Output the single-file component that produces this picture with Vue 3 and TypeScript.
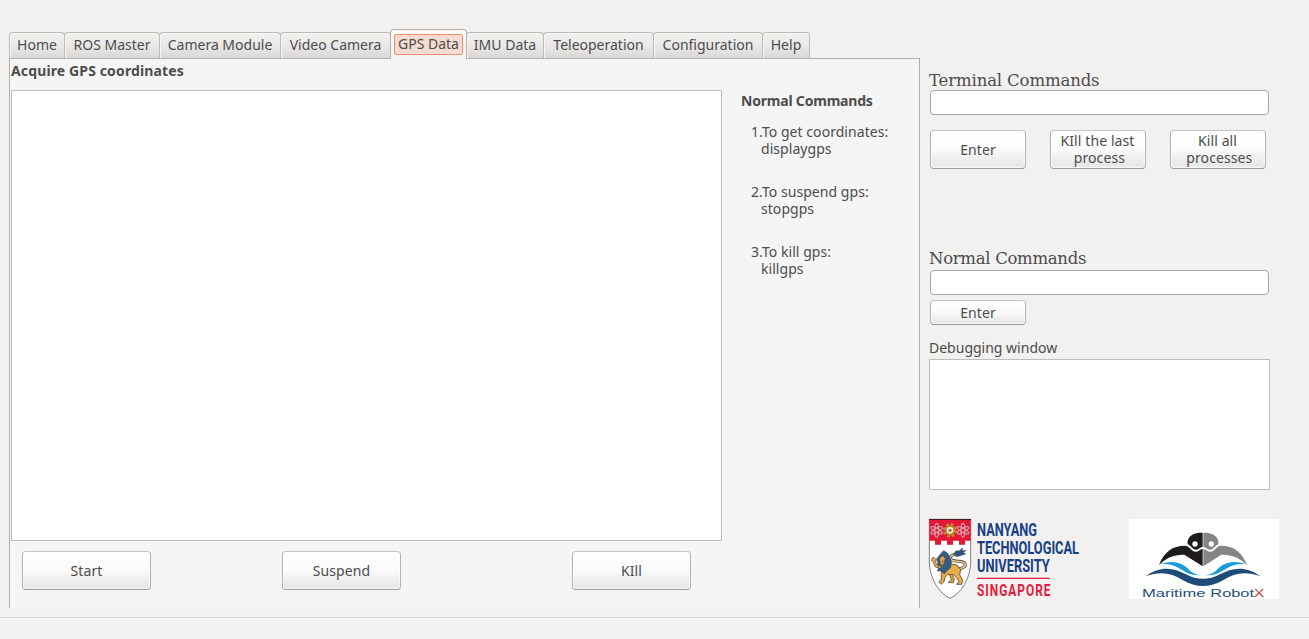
<script setup lang="ts">
import { ref } from 'vue'

interface Command {
  title: string
  name: string
}

const tabs: string[] = [
  'Home',
  'ROS Master',
  'Camera Module',
  'Video Camera',
  'GPS Data',
  'IMU Data',
  'Teleoperation',
  'Configuration',
  'Help',
]
const active = ref('GPS Data')

const commands: Command[] = [
  { title: '1.To get coordinates:', name: 'displaygps' },
  { title: '2.To suspend gps:', name: 'stopgps' },
  { title: '3.To kill gps:', name: 'killgps' },
]

const terminalCommand = ref('')
const normalCommand = ref('')
</script>

<template>
  <div class="window">
    <main class="content">
      <section class="notebook">
        <nav class="tabs">
          <button
            v-for="tab in tabs"
            :key="tab"
            class="tab"
            :class="{ active: tab === active }"
            @click="active = tab"
          >
            <span class="tab-label">{{ tab }}</span>
          </button>
        </nav>
        <div class="page">
          <h1 class="page-title">Acquire GPS coordinates</h1>
          <div class="page-body">
            <div class="output"></div>
            <aside class="help">
              <h2 class="help-title">Normal Commands</h2>
              <dl class="commands">
                <div v-for="c in commands" :key="c.name" class="command">
                  <dt>{{ c.title }}</dt>
                  <dd>{{ c.name }}</dd>
                </div>
              </dl>
            </aside>
          </div>
          <div class="actions">
            <button class="btn start">Start</button>
            <button class="btn">Suspend</button>
            <button class="btn">KIll</button>
          </div>
        </div>
      </section>

      <section class="side">
        <h2 class="serif">Terminal Commands</h2>
        <input v-model="terminalCommand" class="entry" type="text" />
        <div class="terminal-actions">
          <button class="btn">Enter</button>
          <button class="btn two-line">KIll the last<br />&nbsp;process</button>
          <button class="btn two-line">Kill all<br />&nbsp;processes</button>
        </div>
        <h2 class="serif second">Normal Commands</h2>
        <input v-model="normalCommand" class="entry" type="text" />
        <button class="btn small">Enter</button>
        <p class="debug-label">Debugging window</p>
        <div class="debug"></div>

        <div class="logos">
          <svg class="logo" viewBox="27 27 450 240">
            <path d="M28 28H152V155C152 205 122 252 90 265C58 252 28 205 28 155Z" fill="#fff" stroke="#666" stroke-width="2.5" />
            <path d="M28 28H152V92H135V104H117V92H99V104H81V92H63V104H45V92H28Z" fill="#e31837" />
            <path d="M27 28.500H153" stroke="#4a1520" stroke-width="3" />
            <g fill="none" stroke="#d5a5ac" stroke-width="3.500">
              <g v-for="x in [50, 129]" :key="x">
                <ellipse :cx="x" cy="61" rx="6" ry="21" />
                <ellipse :cx="x" cy="61" rx="6" ry="19" :transform="`rotate(60 ${x} 61)`" />
                <ellipse :cx="x" cy="61" rx="6" ry="19" :transform="`rotate(120 ${x} 61)`" />
              </g>
            </g>
            <circle cx="90" cy="61" r="17" fill="none" stroke="#c98f2c" stroke-width="9" stroke-dasharray="7 6.350" />
            <circle cx="90" cy="61" r="13" fill="#f5efe0" stroke="#b98427" stroke-width="6" />
            <circle cx="90" cy="61" r="5" fill="#8f7a45" />
            <g stroke-linejoin="round" stroke-linecap="round">
              <path d="M112 176C126 177 138 171 135 160C131 151 103 157 94 149C85 139 99 131 115 135" fill="none" stroke="#604c38" stroke-width="9" />
              <path d="M112 176C126 177 138 171 135 160C131 151 103 157 94 149C85 139 99 131 115 135" fill="none" stroke="#efd7a3" stroke-width="4" />
              <path d="M101 133L108 122L117 123L128 114L126 123L137 121L130 129L137 132L120 137L110 139Z" fill="#31557f" stroke="#263e59" stroke-width="1.500" />
              <path d="M63 165L80 159L111 165L122 179L119 194L128 211L125 223L110 223L117 214L108 202L101 194L83 193L75 203L72 215L63 223L57 217L64 207L64 190Z" fill="#e7ac45" stroke="#594633" stroke-width="2.500" />
              <path d="M98 195L103 208L100 219L84 217L94 209L88 194" fill="#d69b38" stroke="#594633" stroke-width="2" />
              <path d="M61 133L71 122L82 129L89 140L94 157L91 174L82 181L73 191L62 182L52 183L56 174L46 169L54 160L50 148Z" fill="#385d84" stroke="#28425c" stroke-width="2" />
              <path d="M59 144L68 137L76 145L73 159L68 168L61 161Z" fill="#dda04b" stroke="#493f38" stroke-width="2" />
              <path d="M66 151L71 154L67 160Z" fill="#9c382f" />
              <path d="M60 175L45 170L39 154L35 152L36 144L42 142L48 149L47 158L54 167L65 169" fill="#e7ac45" stroke="#594633" stroke-width="2" />
            </g>
            <g class="ntu-name">
              <text x="171" y="78" textLength="180" lengthAdjust="spacingAndGlyphs">NANYANG</text>
              <text x="171" y="132" textLength="306" lengthAdjust="spacingAndGlyphs">TECHNOLOGICAL</text>
              <text x="171" y="187" textLength="218" lengthAdjust="spacingAndGlyphs">UNIVERSITY</text>
            </g>
            <path d="M171 205H389" stroke="#e31b3c" stroke-width="3.500" />
            <g transform="translate(171 257) scale(.76 1)">
              <text class="ntu-country" x="0" y="0" textLength="290">SINGAPORE</text>
            </g>
          </svg>

          <svg class="logo" viewBox="27 27 450 240">
            <rect x="27" y="27" width="450" height="240" fill="#fff" />
            <path d="M117 165C132 124 160 106 197 107C210 110 215 125 227 125C236 125 239 118 248 116V169L193 134C162 133 139 143 117 165Z" fill="#1e1b1a" />
            <path d="M381 165C366 124 338 106 301 107C288 110 283 125 271 125C262 125 259 118 250 116V169L304 134C335 133 358 143 381 165Z" fill="#858585" />
            <path d="M248 68H235C211 72 201 85 203 103C213 107 218 119 227 119C236 119 239 112 248 110Z" fill="#1e1b1a" />
            <path d="M250 68H262C286 72 297 85 295 103C285 107 280 119 271 119C262 119 259 112 250 110Z" fill="#858585" />
            <circle cx="225" cy="102" r="8" fill="#fff" />
            <circle cx="274" cy="102" r="8" fill="#fff" />
            <path d="M120 163C165 147 191 162 210 182C220 190 229 194 241 195C210 199 195 184 176 174C159 165 141 160 120 163Z" fill="#1b9bdc" />
            <path d="M378 163C333 147 307 162 288 182C278 190 269 194 257 195C288 199 303 184 322 174C339 165 357 160 378 163Z" fill="#1b9bdc" />
            <path d="M77 199C122 165 163 174 198 193C232 211 266 211 300 193C335 174 376 165 421 199C380 184 345 187 309 211C270 234 228 234 189 211C153 187 118 184 77 199Z" fill="#1e4b78" />
            <g class="robotx-name">
              <text x="66" y="262" textLength="190" lengthAdjust="spacingAndGlyphs">Maritime</text>
              <text x="271" y="262" textLength="131" lengthAdjust="spacingAndGlyphs">Robot</text>
              <text x="401" y="262" textLength="32" lengthAdjust="spacingAndGlyphs" class="robotx-mark">X</text>
            </g>
          </svg>
        </div>
      </section>
    </main>
    <footer class="statusbar"></footer>
  </div>
</template>

<style>
body {
  background: #f2f1ef;
}
</style>

<style scoped>
* {
  box-sizing: border-box;
}
h1, h2, p, dl, dd {
  margin: 0;
}
button {
  font: inherit;
  color: inherit;
  letter-spacing: inherit;
  padding: 0;
}
.window {
  height: 639px;
  display: flex;
  flex-direction: column;
  overflow: hidden;
  background: #f2f1ef;
  color: #4c4c4c;
  font: 14px/17px "Noto Sans", "Open Sans", sans-serif;
}
.content {
  height: 617px;
  display: flex;
  gap: 9px;
  padding: 29px 0 9px 9px;
}
.notebook {
  width: 911px;
  display: flex;
  flex-direction: column;
}
.tabs {
  height: 29px;
  display: grid;
  grid-template-columns: 55px 95px 121px 110px 76px 77px 110px 109px 47px;
  align-items: end;
}
.tab {
  height: 27px;
  margin: 0 -1px -1px 0;
  padding-bottom: 2px;
  border: 1px solid #bdb9b5;
  border-radius: 4px 4px 0 0;
  border-bottom-color: #b6aea8;
  background: linear-gradient(#f2f1f0, #eae9e8 50%, #dad8d6);
  box-shadow: inset 1px 1px #f8f7f6;
  white-space: nowrap;
}
.tab.active {
  position: relative;
  height: 30px;
  padding: 3px 3px 4px;
  border-color: #b6aea8;
  border-bottom: 0;
  background: linear-gradient(#fff, #f5f5f5 50%);
}
.tab-label {
  display: block;
}
.active .tab-label {
  height: 21px;
  border: 1px solid #f39068;
  border-radius: 2px;
  background: #f5dcd2;
  line-height: 18px;
}
.page {
  flex: 1;
  padding: 3px 0 0 1px;
  border: 1px solid #b6aea8;
  border-bottom: 0;
  background: #f5f5f5;
}
.page-title, .help-title {
  font-size: 14px;
  font-weight: 700;
  line-height: 17px;
}
.page-title {
  height: 28px;
  letter-spacing: 0.13px;
}
.help-title {
  letter-spacing: -0.2px;
}
.page-body {
  display: flex;
}
.output {
  width: 711px;
  height: 451px;
  border: 1px solid #bfbdb9;
  background: #fff;
}
.help {
  padding: 2px 0 0 19px;
}
.commands {
  display: grid;
  gap: 26px;
  padding: 14px 0 0 10px;
  letter-spacing: 0.05px;
}
.command dd {
  padding-left: 10px;
}
.actions {
  display: grid;
  grid-template-columns: 129px 119px 119px;
  column-gap: 131px;
  padding: 10px 0 0 11px;
}
.actions .btn:last-child {
  margin-left: 40px;
  margin-right: -40px;
}
.btn {
  height: 39px;
  border: 1px solid #b5b1ad;
  border-top-color: #c8c5c1;
  border-bottom-color: #9d9a97;
  border-radius: 4px;
  background: linear-gradient(#fff, #fafafa 50%, #e9e8e7 90%, #ecebea);
  box-shadow: inset 0 0 1px 1px #ffffffb0;
  letter-spacing: 0.1px;
}
.two-line {
  padding: 0 1px 2px 0;
}
.side {
  width: 341px;
  padding-top: 41px;
}
.serif {
  height: 20px;
  font: 400 16.5px/22px "DejaVu Serif", serif;
  letter-spacing: -0.13px;
  white-space: nowrap;
}
.entry {
  display: block;
  width: 339px;
  height: 25px;
  margin-left: 1px;
  padding: 0 6px;
  border: 1px solid #a9a6a2;
  border-radius: 4px;
  background: #fff;
  font: inherit;
}
.terminal-actions {
  display: grid;
  grid-template-columns: repeat(3, 96px);
  gap: 24px;
  padding: 15px 0 0 1px;
}
.second {
  margin-top: 79px;
  height: 22px;
  letter-spacing: -0.3px;
}
.small {
  display: block;
  width: 96px;
  height: 25px;
  margin: 5px 0 0 1px;
}
.debug-label {
  padding-top: 14px;
  height: 34px;
}
.debug {
  height: 131px;
  border: 1px solid #bfbdb9;
  background: #fff;
}
.logos {
  width: 350px;
  display: flex;
  justify-content: space-between;
  padding-top: 29px;
}
.logo {
  display: block;
  width: 150px;
  height: 80px;
  overflow: visible;
}
.ntu-name {
  font: 700 57px Roboto, sans-serif;
  fill: #174086;
}
.ntu-country {
  font: 700 47px Roboto, sans-serif;
  fill: #e31b3c;
}
.robotx-name {
  font: 400 35px "Liberation Sans", sans-serif;
  fill: #265078;
}
.robotx-mark {
  fill: #c33a35;
}
.statusbar {
  height: 22px;
  border-top: 1px solid #d6d4d1;
  box-shadow: inset 0 1px #fbfbfa;
}
</style>
